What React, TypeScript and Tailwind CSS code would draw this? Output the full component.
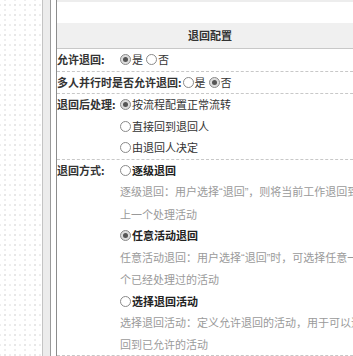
import React from 'react';

const Radio: React.FC<{ checked?: boolean }> = ({ checked }) => (
  <span
    className={`inline-flex items-center justify-center w-[11px] h-[11px] rounded-full border border-[#8a8a8a] shrink-0 ${
      checked ? 'bg-[#dcdcdc]' : 'bg-white'
    }`}
  >
    {checked && <span className="w-[5px] h-[5px] rounded-full bg-[#555]" />}
  </span>
);

const Option: React.FC<{ checked?: boolean; label: string; bold?: boolean }> = ({ checked, label, bold }) => (
  <span className="inline-flex items-center gap-px mr-[3px]">
    <Radio checked={checked} />
    <span className={bold ? 'font-bold text-[#222]' : ''}>{label}</span>
  </span>
);

// curly quotes are narrow in the original font, CJK fonts make them full width
const Quoted: React.FC<{ text: string }> = ({ text }) => {
  const parts = text.split(/([“”])/);
  return (
    <>
      {parts.map((p, i) =>
        p === '“' || p === '”' ? (
          <span key={i} style={{ fontFamily: '"Liberation Sans", sans-serif' }}>
            {p}
          </span>
        ) : (
          <React.Fragment key={i}>{p}</React.Fragment>
        )
      )}
    </>
  );
};

const GridBg = () => (
  <svg width="42" height="356" className="block">
    <defs>
      <pattern id="grid" width="10" height="10" patternUnits="userSpaceOnUse">
        <line x1="5" y1="0" x2="5" y2="10" stroke="#dedede" strokeWidth="1" strokeDasharray="2 3" strokeDashoffset="1" />
        <line x1="0" y1="5" x2="10" y2="5" stroke="#dedede" strokeWidth="1" strokeDasharray="2 3" strokeDashoffset="1" />
      </pattern>
    </defs>
    <rect width="42" height="356" fill="url(#grid)" />
  </svg>
);

const modes = [
  {
    title: '逐级退回',
    checked: false,
    lines: ['逐级退回：用户选择“退回”，则将当前工作退回到', '上一个处理活动'],
  },
  {
    title: '任意活动退回',
    checked: true,
    lines: ['任意活动退回：用户选择“退回”时，可选择任意一', '个已经处理过的活动'],
  },
  {
    title: '选择退回活动',
    checked: false,
    lines: ['选择退回活动：定义允许退回的活动，用于可以退', '回到已允许的活动'],
  },
];

export default function App() {
  return (
    <div
      className="w-[353px] h-[356px] overflow-hidden flex bg-white text-[11px] text-[#333] leading-[21.5px]"
      style={{ fontFamily: '"Noto Sans CJK SC", "Microsoft YaHei", sans-serif' }}
    >
      <div className="w-[42px] shrink-0">
        <GridBg />
      </div>
      <div className="w-px shrink-0 bg-[#c4c4c4]" />
      <div className="w-[7px] shrink-0 bg-[#ececec]" />
      <div className="w-px shrink-0 bg-[#9a9a9a]" />
      <div className="w-[5px] shrink-0 bg-white" />
      <div className="w-px shrink-0 bg-[#8c8c8c]" />

      <div className="w-[306px] shrink-0 flex flex-col whitespace-nowrap">
        <div className="h-[2px] bg-[#ededed]" />
        <div className="h-[21px]" />
        <div className="h-[26px] bg-[#f0f0f0] border-b border-[#c8c8c8] flex items-center justify-center font-bold text-[#333]">
          退回配置
        </div>

        <div className="flex border-b border-dashed border-[#c8c8c8]">
          <span className="w-[63px] shrink-0 font-bold">允许退回:</span>
          <div className="flex items-center">
            <Option checked label="是" />
            <Option label="否" />
          </div>
        </div>

        <div className="flex border-b border-dashed border-[#c8c8c8]">
          <span className="shrink-0 font-bold mr-px">多人并行时是否允许退回:</span>
          <div className="flex items-center">
            <Option label="是" />
            <Option checked label="否" />
          </div>
        </div>

        <div className="flex border-b border-dashed border-[#c8c8c8]">
          <span className="w-[63px] shrink-0 font-bold">退回后处理:</span>
          <div className="flex flex-col">
            <Option checked label="按流程配置正常流转" />
            <Option label="直接回到退回人" />
            <Option label="由退回人决定" />
          </div>
        </div>

        <div className="flex border-b border-dashed border-[#c8c8c8]">
          <span className="w-[63px] shrink-0 font-bold">退回方式:</span>
          <div className="flex flex-col">
            {modes.map((m) => (
              <div key={m.title} className="flex flex-col">
                <Option checked={m.checked} label={m.title} bold />
                {m.lines.map((l) => (
                  <span key={l} className="text-[#9a9a9a]">
                    <Quoted text={l} />
                  </span>
                ))}
              </div>
            ))}
          </div>
        </div>
      </div>
    </div>
  );
}
